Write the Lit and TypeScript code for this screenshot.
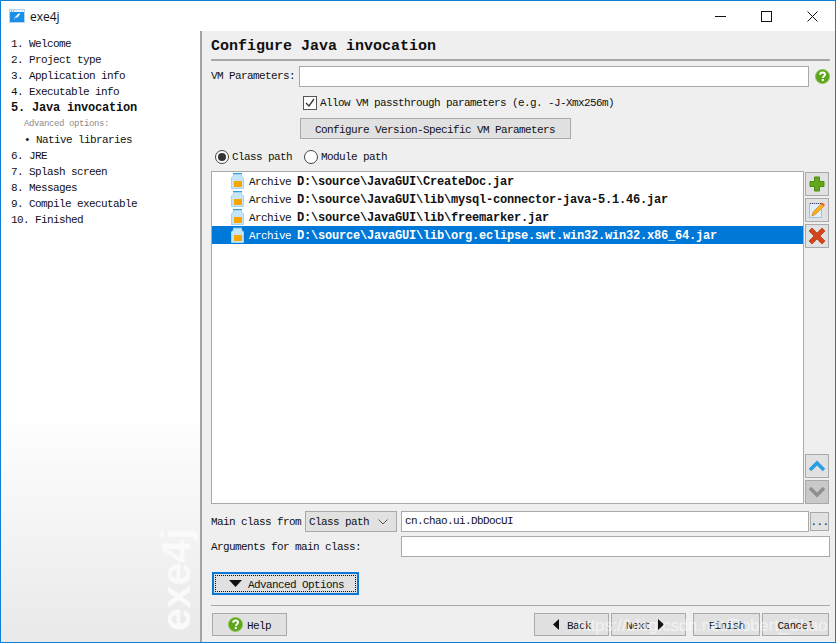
import { LitElement, html, css } from "lit";
import { customElement } from "lit/decorators.js";

const jar = () => html`<svg class="jar" width="13" height="16" viewBox="0 0 13 16">
  <rect x="2" y="0" width="9" height="1.500" fill="#2b9fe0"/>
  <path d="M2.500 1.500h8v1.500L12.500 5v10.500H.5V5l2-2z" fill="#c4e6f8" stroke="#a6d4ee"/>
  <rect x="3" y="8" width="8" height="6" fill="#f7a600"/>
</svg>`;

const help = (s: number) => html`<svg width=${s} height=${s} viewBox="0 0 16 16">
  <circle cx="8" cy="8" r="7.500" fill="#5fa51c" stroke="#8cc455"/>
  <path d="M5.500 6.200C5.500 4.600 6.700 3.700 8.100 3.700c1.500 0 2.600.9 2.600 2.200 0 1.900-2.300 1.900-2.300 3.700" fill="none" stroke="#fff" stroke-width="2"/>
  <rect x="7.200" y="10.700" width="2.200" height="2.200" fill="#fff"/>
</svg>`;

const steps: [string, string][] = [
  ["1. ", "Welcome"], ["2. ", "Project type"], ["3. ", "Application info"], ["4. ", "Executable info"],
];
const steps2: [string, string][] = [
  ["6. ", "JRE"], ["7. ", "Splash screen"], ["8. ", "Messages"], ["9. ", "Compile executable"], ["10. ", "Finished"],
];
const archives = [
  "D:\\source\\JavaGUI\\CreateDoc.jar",
  "D:\\source\\JavaGUI\\lib\\mysql-connector-java-5.1.46.jar",
  "D:\\source\\JavaGUI\\lib\\freemarker.jar",
  "D:\\source\\JavaGUI\\lib\\org.eclipse.swt.win32.win32.x86_64.jar",
];

@customElement("app-root")
export class AppRoot extends LitElement {
  static styles = css`
    :host {
      display: block; width: 836px; height: 643px; overflow: hidden; position: relative;
      font-family: "Liberation Mono", monospace; font-size: 11px; letter-spacing: -0.6px; color: #111;
    }
    * { box-sizing: border-box; }
    .window { width: 836px; height: 643px; border: 1px solid #0f7fd6; display: flex; flex-direction: column; background: #fff; }
    .titlebar { height: 30px; flex: none; display: flex; align-items: center; background: #fff; padding-left: 8px; }
    .appname { font-family: "Open Sans", sans-serif; font-size: 12px; letter-spacing: 0; margin-left: 5px; color: #111; }
    .controls { margin-left: auto; display: flex; }
    .ctl { width: 46px; height: 30px; display: flex; align-items: center; justify-content: center; }
    .body { flex: 1; display: flex; min-height: 0; }
    .side {
      width: 199px; flex: none; padding: 5px 0 0 10px; position: relative; overflow: hidden;
      background: linear-gradient(#fff 0, #fff 62%, #e9e9e9 100%);
    }
    .step { height: 16px; line-height: 17px; white-space: pre; }
    .step.on { font-weight: bold; font-size: 12px; letter-spacing: -0.2px; }
    .sub { height: 16px; line-height: 17px; padding-left: 13px; font-size: 9px; letter-spacing: -0.4px; color: #8b8b8b; }
    .native { height: 16px; line-height: 17px; padding-left: 13px; white-space: pre; }
    .mark {
      position: absolute; left: 195px; bottom: 11px; transform-origin: left bottom; transform: rotate(-90deg);
      font-family: "Liberation Sans", sans-serif; font-weight: bold; font-size: 41px; letter-spacing: 0; line-height: 40px; color: #fafafa;
    }
    .main {
      flex: 1; min-width: 0; background: #efefef; border-left: 2px solid #a3a3a3; padding: 0 5px 0 9px;
      display: flex; flex-direction: column;
    }
    .title { line-height: 32px; font-weight: bold; font-size: 15px; letter-spacing: 0; flex: none; border-bottom: 2px solid #a8a8a8; height: 30px; }
    .row { display: flex; align-items: center; flex: none; }
    .vm { margin-top: 4px; height: 22px; }
    .label { width: 88px; flex: none; white-space: pre; }
    .input { background: #fff; border: 1px solid #a9a9a9; height: 21px; line-height: 19px; padding-left: 3px; }
    .grow { flex: 1; }
    .helpi { margin-left: 6px; width: 15px; display: flex; }
    .chk { margin-top: 8px; height: 16px; padding-left: 92px; }
    .box { width: 14px; height: 14px; border: 1px solid #555; background: #fff; display: flex; margin-right: 3px; flex: none; }
    .btn { background: #e1e1e1; border: 1px solid #a9a9a9; display: flex; align-items: center; white-space: pre; }
    .t { padding-top: 2px; }
    .cfg { margin: 7px 0 0 89px; width: 271px; height: 21px; padding-left: 14px; flex: none; }
    .radios { margin-top: 10px; height: 16px; padding-left: 4px; }
    .radio { width: 14px; height: 14px; border-radius: 50%; border: 1px solid #444; background: #fff; flex: none; margin-right: 3px; display: flex; align-items: center; justify-content: center; }
    .radio i { width: 8px; height: 8px; border-radius: 50%; background: #333; display: block; }
    .radio.second { margin-left: 12px; }
    .listwrap { margin-top: 6px; height: 333px; display: flex; flex: none; }
    .list { width: 593px; flex: none; background: #fff; border: 1px solid #a9a9a9; padding-top: 0; }
    .item { height: 18px; display: flex; align-items: center; padding-left: 19px; white-space: pre; }
    .item .jar { margin-right: 5px; flex: none; }
    .item b { font-size: 12px; letter-spacing: -0.2px; }
    .item.sel { background: #0078d7; color: #fff; }
    .tools { flex: 1; display: flex; flex-direction: column; padding: 1px 0 0 1px; gap: 2px; }
    .tool { width: 24px; height: 24px; background: #e1e1e1; border: 1px solid #a9a9a9; display: flex; align-items: center; justify-content: center; flex: none; }
    .tool.dis { background: #c9c9c9; }
    .spacer { flex: 1; }
    .mainclass { margin-top: 7px; height: 21px; }
    .mlabel { width: 94px; flex: none; white-space: pre; }
    .combo { width: 92px; height: 21px; padding: 0 8px 0 3px; justify-content: space-between; background: #e1e1e1; }
    .mc-in { margin-left: 4px; width: 408px; flex: none; }
    .dots { width: 19px; height: 19px; margin-left: 1px; justify-content: center; }
    .args { margin-top: 4px; height: 21px; }
    .args .label { width: 190px; }
    .args .input { flex: 1; }
    .adv { margin: 15px 0 0 1px; width: 147px; height: 23px; border: 2px solid #0a78d6; padding: 1px; background: #e1e1e1; flex: none; }
    .advin { flex: 1; height: 100%; border: 1px dotted #111; display: flex; align-items: center; padding-left: 13px; }
    .tri { margin-right: 6px; display: flex; }
    .sep { margin-top: 10px; height: 1px; background: #a8a8a8; flex: none; }
    .foot { margin-top: 7px; height: 23px; padding-left: 1px; }
    .fb { height: 23px; }
    .fhelp { width: 75px; padding-left: 15px; }
    .fhelp svg { margin-right: 4px; }
    .back { margin-left: auto; width: 75px; padding-left: 18px; }
    .back svg { margin-right: 8px; }
    .next { margin-left: 2px; width: 75px; padding-left: 14px; }
    .next svg { margin-left: 8px; }
    .finish { margin-left: 7px; width: 67px; justify-content: center; }
    .cancel { margin-left: 2px; width: 67px; margin-right: 1px; justify-content: center; }
    .blog {
      position: absolute; left: 577px; top: 613px; font-family: "Liberation Sans", sans-serif; font-size: 16.500px; letter-spacing: 0;
      line-height: 24px; color: rgba(255,255,255,0.62); white-space: nowrap;
    }
  `;

  render() {
    return html`<div class="window">
      <div class="titlebar">
        <svg width="16" height="14" viewBox="0 0 16 14">
          <rect x="0.500" y="0.500" width="15" height="13" fill="#1a8fe8" stroke="#b5d6f0"/>
          <rect x="1" y="1" width="14" height="2" fill="#e6f2fb"/>
          <path d="M2 2h3" stroke="#d9534f" stroke-dasharray="1 1"/>
          <path d="M5 11l1-3 3-3 2-1-.5 2-2.500 3-1-1z" fill="#fff"/>
        </svg>
        <span class="appname">exe4j</span>
        <div class="controls">
          <div class="ctl"><svg width="11" height="11"><path d="M0 5.500h11" stroke="#111"/></svg></div>
          <div class="ctl"><svg width="11" height="11"><rect x=".5" y=".5" width="10" height="10" fill="none" stroke="#111"/></svg></div>
          <div class="ctl"><svg width="11" height="11"><path d="M.5.500l10 10M10.500.500l-10 10" stroke="#111"/></svg></div>
        </div>
      </div>
      <div class="body">
        <div class="side">
          ${steps.map((s) => html`<div class="step">${s[0]}${s[1]}</div>`)}
          <div class="step on">5. Java invocation</div>
          <div class="sub">Advanced options:</div>
          <div class="native">• Native libraries</div>
          ${steps2.map((s) => html`<div class="step">${s[0]}${s[1]}</div>`)}
          <div class="mark">exe4j</div>
        </div>
        <div class="main">
          <div class="title">Configure Java invocation</div>
          <div class="row vm">
            <span class="label">VM Parameters:</span>
            <div class="input grow"></div>
            <span class="helpi">${help(15)}</span>
          </div>
          <div class="row chk">
            <span class="box"><svg width="12" height="12" viewBox="0 0 12 12"><path d="M2 6l3 3 5-7" fill="none" stroke="#333" stroke-width="1.300"/></svg></span>
            <span>Allow VM passthrough parameters (e.g. -J-Xmx256m)</span>
          </div>
          <div class="btn cfg"><span class="t">Configure Version-Specific VM Parameters</span></div>
          <div class="row radios">
            <span class="radio"><i></i></span><span>Class path</span>
            <span class="radio second"></span><span>Module path</span>
          </div>
          <div class="listwrap">
            <div class="list">
              ${archives.map((a, i) => html`<div class="item ${i === 3 ? "sel" : ""}">${jar()}<span class="t">Archive </span><b class="t">${a}</b></div>`)}
            </div>
            <div class="tools">
              <div class="tool"><svg width="18" height="18" viewBox="0 0 18 18"><path d="M6.500 2h5v4.500H16v5h-4.500V16h-5v-4.500H2v-5h4.500z" fill="#62a81d" stroke="#4c8a12"/></svg></div>
              <div class="tool"><svg width="18" height="18" viewBox="0 0 18 18"><rect x="1.500" y="2.500" width="12" height="14" fill="#dff0fb" stroke="#9cc5dc"/><path d="M2 2.500h11" stroke="#446" stroke-dasharray="1 1"/><path d="M4 15l1-4 8-8 3 2-8 8z" fill="#f6b21f" stroke="#e07a1a" stroke-width=".7"/><path d="M13 3l3 2 1-1-3-2.500z" fill="#e8502a"/></svg></div>
              <div class="tool"><svg width="18" height="18" viewBox="0 0 18 18"><path d="M4 1l5 5 5-5 3 3-5 5 5 5-3 3-5-5-5 5-3-3 5-5-5-5z" fill="#d2441b" stroke="#b0350f" stroke-width=".7"/></svg></div>
              <div class="spacer"></div>
              <div class="tool"><svg width="18" height="14" viewBox="0 0 18 14"><path d="M2 11l7-7 7 7" fill="none" stroke="#2a9ee4" stroke-width="3.600"/></svg></div>
              <div class="tool dis"><svg width="18" height="14" viewBox="0 0 18 14"><path d="M2 3l7 7 7-7" fill="none" stroke="#8f8f8f" stroke-width="3.600"/></svg></div>
            </div>
          </div>
          <div class="row mainclass">
            <span class="mlabel">Main class from</span>
            <div class="btn combo"><span>Class path</span><svg width="10" height="6"><path d="M.5.500l4.500 4.500 4.500-4.500" fill="none" stroke="#555"/></svg></div>
            <div class="input mc-in">cn.chao.ui.DbDocUI</div>
            <div class="btn dots">...</div>
          </div>
          <div class="row args">
            <span class="label">Arguments for main class:</span>
            <div class="input"></div>
          </div>
          <div class="adv"><div class="advin"><span class="tri"><svg width="13" height="7"><path d="M0 0h13L6.500 7z" fill="#111"/></svg></span><span class="t">Advanced Options</span></div></div>
          <div class="sep"></div>
          <div class="row foot">
            <div class="btn fb fhelp">${help(15)}<span class="t">Help</span></div>
            <div class="btn fb back"><svg width="6" height="11"><path d="M6 0v11L0 5.500z" fill="#111"/></svg><span class="t">Back</span></div>
            <div class="btn fb next"><span class="t">Next</span><svg width="6" height="11"><path d="M0 0v11l6-5.500z" fill="#111"/></svg></div>
            <div class="btn fb finish"><span class="t">Finish</span></div>
            <div class="btn fb cancel"><span class="t">Cancel</span></div>
          </div>
        </div>
      </div>
    </div>
    <div class="blog">https://blog.csdn.net/Robert_Chao</div>`;
  }
}
